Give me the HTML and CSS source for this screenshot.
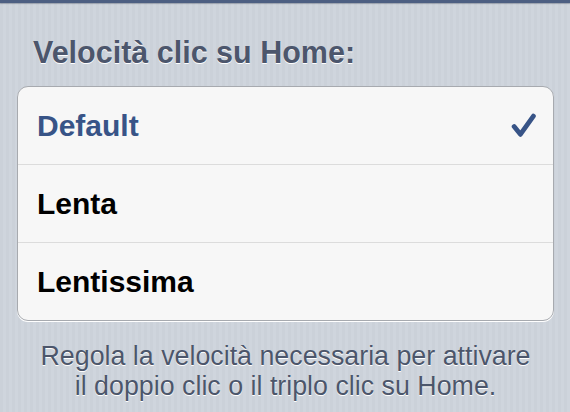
FILE: index.html
```html
<!DOCTYPE html>
<html lang="it">
<head>
<meta charset="utf-8">
<link rel="stylesheet" href="styles.css">
</head>
<body>
<div class="topbar"></div>
<div class="content">
  <h2 class="group-title">Velocità clic su Home:</h2>
  <ul class="group">
    <li class="row selected"><span class="label">Default</span>
      <svg class="check" viewBox="0 0 24 24" width="24" height="24"><path d="M3 13 L9 20.5 L21.5 3" fill="none" stroke="#385487" stroke-width="4.6" stroke-linecap="round" stroke-linejoin="round"/></svg>
    </li>
    <li class="row"><span class="label">Lenta</span></li>
    <li class="row"><span class="label">Lentissima</span></li>
  </ul>
  <p class="footer">Regola la velocità necessaria per attivare<br>il doppio clic o il triplo clic su Home.</p>
</div>
</body>
</html>
```
FILE: styles.css
```css
html, body {
  margin: 0;
  padding: 0;
}
body {
  width: 570px;
  height: 412px;
  overflow: hidden;
  font-family: "Liberation Sans", Arial, sans-serif;
  background: repeating-linear-gradient(90deg, #cbd1d9 0 3px, #cfd5dd 3px 6px);
}
.topbar {
  height: 3px;
  background: #4d5f82;
  box-shadow: 0 1px 1px rgba(60, 70, 90, 0.35);
}
.content {
  padding: 0 16px 0 17px;
}
.group-title {
  margin: 0;
  padding: 31px 0 16px 16px;
  font-size: 30.5px;
  line-height: 36px;
  font-weight: bold;
  color: #4c566c;
  text-shadow: 0 1px 0 #ffffff;
}
.group {
  list-style: none;
  margin: 0;
  padding: 0;
  background: #f7f7f7;
  border: 1px solid #a7aaaf;
  border-radius: 11px;
  box-shadow: 0 1px 0 #ffffff;
  overflow: hidden;
}
.row {
  height: 78px;
  box-sizing: border-box;
  display: flex;
  align-items: center;
  justify-content: space-between;
  padding: 0 17px 0 19px;
  border-top: 1px solid #dcdcdc;
}
.row:first-child {
  border-top: none;
  height: 77px;
}
.label {
  font-size: 30px;
  font-weight: bold;
  color: #000000;
}
.selected .label {
  color: #385487;
}
.check {
  width: 25px;
  height: 25px;
}
.footer {
  margin: 20px 0 0;
  text-align: center;
  font-size: 26.8px;
  line-height: 30px;
  color: #4c566b;
  text-shadow: 0 1px 0 #ffffff;
}
```
